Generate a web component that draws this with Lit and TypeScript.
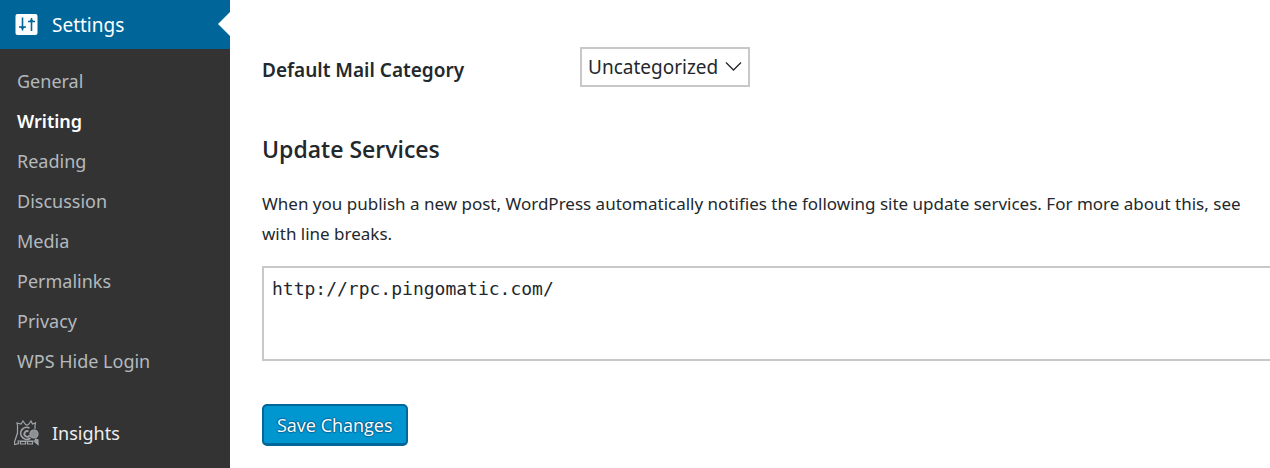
import { LitElement, html, css } from "lit";
import { customElement } from "lit/decorators.js";

@customElement("app-root")
export class AppRoot extends LitElement {
  static styles = css`
    :host {
      display: block;
      min-height: 100vh;
      overflow: hidden;
      background: #fff;
      color: #23282d;
      font: 18px/30px "Noto Sans", "Open Sans", sans-serif;
    }
    * { box-sizing: border-box; }
    .layout { display: grid; grid-template-columns: 230px minmax(0, 1fr); min-height: 100vh; }
    .side { background: #333; }
    .top {
      position: relative;
      display: flex;
      align-items: center;
      gap: 12px;
      height: 49px;
      padding: 0 14px;
      color: #fff;
      text-decoration: none;
      font-size: 19px;
    }
    .top.plain { font-size: 18px; color: #eee; }
    .current { background: #069; }
    .current::after {
      content: "";
      position: absolute;
      right: 0;
      top: 12px;
      border: 12px solid transparent;
      border-left: 0;
      border-right-color: #fff;
    }
    .top svg { width: 26px; height: 26px; flex: none; }
    ul { list-style: none; margin: 0; padding: 12px 0 27px 17px; }
    li a { display: block; line-height: 40px; color: #b4b9be; text-decoration: none; }
    li a.on { color: #fff; font-weight: 600; }
    main { padding: 47px 0 16px 32px; min-width: 0; }
    .row { display: grid; grid-template-columns: 318px max-content; align-items: end; }
    .row label { font-size: 19px; font-weight: 600; line-height: 34px; }
    .pick { position: relative; }
    .pick svg { position: absolute; right: 8px; top: 12px; width: 17px; height: 14px; pointer-events: none; }
    select {
      display: block;
      appearance: none;
      height: 40px;
      width: 170px;
      padding: 0 6px;
      font: inherit;
      font-size: 19px;
      color: inherit;
      border: 2px solid #c8c8c8;
      border-radius: 0;
      background: #fff;
    }
    h2 { margin: 46px 0 24px; font: 600 23px/32px "Open Sans", sans-serif; }
    p { margin: 0 0 17px; font-size: 17px; }
    textarea {
      display: block;
      width: 100%;
      height: 95px;
      resize: none;
      border: 2px solid #c8c8c8;
      border-right: 0;
      border-radius: 0;
      padding: 8px;
      font: 18px/26px "DejaVu Sans Mono", monospace;
      color: inherit;
    }
    button {
      display: block;
      margin-top: 43px;
      height: 42px;
      padding: 0 13px;
      border: 2px solid #006799;
      border-bottom-width: 3px;
      border-radius: 5px;
      background: #0096d0;
      color: #fff;
      text-shadow: 0 -1px 1px #006799, 1px 0 1px #006799, 0 1px 1px #006799, -1px 0 1px #006799;
      font: 18px/30px "Open Sans", sans-serif;
    }
  `;

  render() {
    const links = ["General", "Writing", "Reading", "Discussion", "Media", "Permalinks", "Privacy", "WPS Hide Login"];
    return html`<div class="layout">
      <nav class="side">
        <a class="top current" href="#settings">
          <svg viewBox="0 0 26 26" aria-hidden="true">
            <rect x="1.500" y="2" width="22" height="21" rx="2" fill="#fff" />
            <path d="M8.500 5.500v13M5 15h7M17.500 6v13M14 9.500h7" stroke="#069" stroke-width="1.600" fill="none" />
            <path d="M6 15h5l-2.500 2.500zM15 9.500h5L17.500 7z" fill="#069" />
          </svg>
          Settings
        </a>
        <ul>${links.map((l) => html`<li><a href="#" class=${l === "Writing" ? "on" : ""}>${l}</a></li>`)}</ul>
        <a class="top plain" href="#insights">
          <svg viewBox="0 0 26 26" aria-hidden="true" fill="none" stroke="#a0a5aa" stroke-width="1.200">
            <path d="M3.500 14V5.500L3 3l4 1L9 1l2.500 3.500L13 5l1.500-.5L17 1l1.500 3 3-1-.5 2.500V9" />
            <path d="M3.500 13L.5 22v2.500l4-1L4 21h17" />
            <path d="M15.500 8a6 6 0 1 0 1 10" stroke-width="1.700" />
            <path d="M14.500 11.500a2.800 2.800 0 1 0 1 4" stroke-width="1.800" />
            <circle cx="20" cy="14" r="4" fill="#8c9095" />
            <path d="M21.500 19l2.500 1v4.500l-3-2.500z" fill="#999" />
            <path d="M6.500 21.500h5V24h-5zM13.500 21.500h5V24h-5z" />
          </svg>
          Insights
        </a>
      </nav>
      <main>
        <div class="row">
          <label for="cat">Default Mail Category</label>
          <div class="pick">
            <select id="cat"><option>Uncategorized</option></select>
            <svg viewBox="0 0 17 14" aria-hidden="true"><path d="M1 3.500l7.500 7.500L16 3.500" fill="none" stroke="#23282d" stroke-width="1.300" /></svg>
          </div>
        </div>
        <h2>Update Services</h2>
        <p>When you publish a new post, WordPress automatically notifies the following site update services. For more about this, see<br />with line breaks.</p>
        <textarea aria-label="Update Services">http://rpc.pingomatic.com/</textarea>
        <button type="button">Save Changes</button>
      </main>
    </div>`;
  }
}
